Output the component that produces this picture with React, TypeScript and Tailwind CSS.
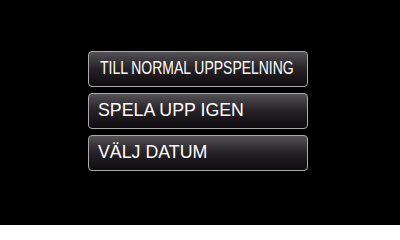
const items = [
  { label: 'TILL NORMAL UPPSPELNING', squeeze: true },
  { label: 'SPELA UPP IGEN', squeeze: false },
  { label: 'VÄLJ DATUM', squeeze: false },
]

export default function App() {
  return (
    <div className="w-[400px] h-[225px] bg-black flex flex-col items-center pt-[51px] gap-[6px] font-['Liberation_Sans',Arial,sans-serif]">
      {items.map((item) => (
        <div
          key={item.label}
          className="w-[220px] h-[36px] ml-[-4px] rounded-[4px] border-[1.5px] border-[#aaaaaa] bg-gradient-to-b from-[#545254] via-[#252125] to-[#0f0c0f] flex items-center px-[9px] overflow-hidden"
        >
          <span
            className={
              item.squeeze
                ? 'text-[17.8px] leading-none text-white whitespace-nowrap origin-left [transform:scaleX(0.785)] inline-block ml-[2px]'
                : 'text-[17.8px] leading-none text-white whitespace-nowrap'
            }
          >
            {item.label}
          </span>
        </div>
      ))}
    </div>
  )
}
